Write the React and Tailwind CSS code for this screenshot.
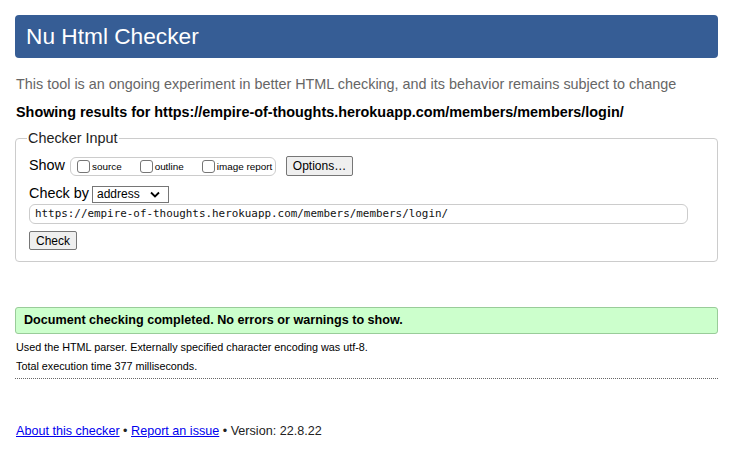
import React from "react";

function Box() {
  return <span className="w-[13px] h-[13px] border border-[#767676] rounded-[3px] bg-white inline-block shrink-0"></span>;
}

export default function App() {
  return (
    <div className="w-[730px] h-[460px] bg-white text-black font-['Liberation_Sans',Arial,sans-serif] pl-[15px] pr-[12px] pt-[15px]">
      <div className="h-[43px] bg-[#365d95] rounded-[4px] flex items-center pl-[11px]">
        <h1 className="text-white text-[22.7px] leading-none">Nu Html Checker</h1>
      </div>
      <p className="mt-[17px] ml-[1px] text-[14.4px] leading-[18px] text-[#666] whitespace-nowrap">
        This tool is an ongoing experiment in better HTML checking, and its behavior remains subject to change
      </p>
      <p className="mt-[10px] ml-[1px] text-[14.4px] leading-[18px] font-bold whitespace-nowrap">
        Showing results for https://empire-of-thoughts.herokuapp.com/members/members/login/
      </p>
      <fieldset className="mt-[8px] border border-[#ccc] rounded-[4px] pl-[13px] pr-[13px] pb-[11px] pt-[9px]">
        <legend className="text-[14.4px] leading-[18px] px-[1px] ml-[-2px] text-[#222]">Checker Input</legend>
        <div className="flex items-center h-[20px]">
          <span className="text-[14.4px]">Show</span>
          <div className="ml-[5px] h-[19px] w-[206px] border border-[#ccc] rounded-[6px] flex items-center pl-[6px] text-[9.9px] whitespace-nowrap">
            <span className="flex items-center">
              <Box />
              <span className="ml-[2px] mt-[3px]">source</span>
            </span>
            <span className="flex items-center ml-[18px]">
              <Box />
              <span className="ml-[2px] mt-[3px]">outline</span>
            </span>
            <span className="flex items-center ml-[18px]">
              <Box />
              <span className="ml-[2px] mt-[3px]">image report</span>
            </span>
          </div>
          <button className="ml-[10px] h-[20px] w-[67px] border border-[#767676] bg-[#efefef] rounded-[2px] text-[12px] leading-none">
            Options…
          </button>
        </div>
        <div className="flex items-center mt-[9px] h-[18px]">
          <span className="text-[14.4px]">Check by</span>
          <div className="ml-[3px] w-[77px] h-[17px] border border-[#767676] bg-white flex items-center justify-between pl-[4px] pr-[8px] text-[12px]">
            <span>address</span>
            <svg width="10" height="7" viewBox="0 0 10 7">
              <path d="M1 1.5 L5 5.5 L9 1.5" fill="none" stroke="#000" strokeWidth="1.8" />
            </svg>
          </div>
        </div>
        <div className="mt-[1px] w-[659px] h-[20px] border border-[#ccc] rounded-[6px] flex items-center pl-[5px] font-['DejaVu_Sans_Mono',monospace] text-[10.9px] text-[#111]">
          https://empire-of-thoughts.herokuapp.com/members/members/login/
        </div>
        <button className="mt-[7px] h-[19px] w-[48px] border border-[#767676] bg-[#efefef] rounded-[2px] text-[12px] leading-none block">
          Check
        </button>
      </fieldset>
      <div className="mt-[45px] h-[27px] bg-[#ccffcc] border border-[#9c9] rounded-[3px] flex items-center pl-[8px] text-[12.6px] font-bold">
        Document checking completed. No errors or warnings to show.
      </div>
      <p className="mt-[6px] ml-[1px] text-[10.8px] leading-[14px]">
        Used the HTML parser. Externally specified character encoding was utf-8.
      </p>
      <p className="mt-[5px] ml-[1px] text-[10.8px] leading-[14px]">Total execution time 377 milliseconds.</p>
      <div className="mt-[5px] border-t border-dotted border-[#666]"></div>
      <p className="mt-[43px] ml-[1px] text-[12.6px] leading-[18px] text-[#222]">
        <a className="text-[#00e] underline" href="#">About this checker</a> •{" "}
        <a className="text-[#00e] underline" href="#">Report an issue</a> • Version: 22.8.22
      </p>
    </div>
  );
}
